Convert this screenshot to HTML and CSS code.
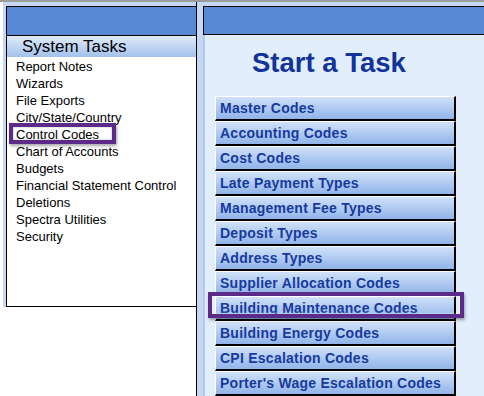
FILE: index.html
```html
<!DOCTYPE html>
<html lang="en">
<head>
    <meta charset="UTF-8">
    <title>Start a Task</title>
    <link rel="stylesheet" href="styles.css">
</head>
<body>
    <div class="topline"></div>
    <div class="frame">
        <div class="side">
            <div class="side-panel">
                <div class="side-header"></div>
                <div class="side-title">System Tasks</div>
                <ul class="task-list">
                    <li>Report Notes</li>
                    <li>Wizards</li>
                    <li>File Exports</li>
                    <li>City/State/Country</li>
                    <li class="marked">Control Codes<span class="mark"></span></li>
                    <li>Chart of Accounts</li>
                    <li>Budgets</li>
                    <li>Financial Statement Control</li>
                    <li>Deletions</li>
                    <li>Spectra Utilities</li>
                    <li>Security</li>
                </ul>
            </div>
        </div>
        <div class="main">
            <div class="main-header"></div>
            <div class="main-body">
                <h1 class="title">Start a Task</h1>
                <div class="buttons">
                    <div class="btn">Master Codes</div>
                    <div class="btn">Accounting Codes</div>
                    <div class="btn">Cost Codes</div>
                    <div class="btn">Late Payment Types</div>
                    <div class="btn">Management Fee Types</div>
                    <div class="btn">Deposit Types</div>
                    <div class="btn">Address Types</div>
                    <div class="btn">Supplier Allocation Codes</div>
                    <div class="btn marked">Building Maintenance Codes<span class="mark"></span></div>
                    <div class="btn">Building Energy Codes</div>
                    <div class="btn">CPI Escalation Codes</div>
                    <div class="btn">Porter's Wage Escalation Codes</div>
                </div>
            </div>
        </div>
    </div>
</body>
</html>
```

FILE: styles.css
```css
body {
    margin: 0;
    background: #fff;
    font-family: 'Liberation Sans', Arial, sans-serif;
    overflow: hidden;
}
.topline {
    height: 2px;
    background: #9c9c9c;
}
.frame {
    display: flex;
    align-items: flex-start;
    height: 394px;
}
/* left column */
.side {
    width: 190px;
    margin-left: 3px;
    padding: 4px 0 0 3px;
    background: #c4d8f4;
}
.side-panel {
    border: 1px solid #000;
    border-right: none;
    background: #fff;
}
.side-header {
    height: 28px;
    background: #5889d4;
    border-bottom: 1px solid #000;
}
.side-title {
    height: 21px;
    line-height: 21px;
    padding-left: 15px;
    font-size: 17px;
    color: #000;
    background: linear-gradient(#e0ebfa, #a3c1ec);
}
.task-list {
    list-style: none;
    margin: 0;
    padding: 1px 0 0 9px;
    height: 248px;
    font-size: 13px;
    line-height: 17px;
    color: #000;
}
.marked {
    position: relative;
}
.task-list .mark {
    position: absolute;
    left: -7px;
    top: -3px;
    width: 99px;
    height: 13px;
    border: 4px solid #5c2a88;
    box-shadow: inset 0 0 3px rgba(0, 0, 0, 0.25), 1px 2px 3px rgba(0, 0, 0, 0.35);
}
/* right column */
.main {
    flex: 1;
    height: 390px;
    padding: 4px 0 0 6px;
    background: #c4d8f4;
    border-left: 1px solid #000;
    display: flex;
    flex-direction: column;
}
.main-header {
    height: 28px;
    background: #5889d4;
    border: 1px solid #000;
    border-right: none;
}
.main-body {
    flex: 1;
    background: #e3eefd;
    border-left: 2px solid #b1c9ef;
    padding: 12px 0 0 10px;
}
.title {
    margin: 0 0 17px 37px;
    font-size: 27.5px;
    line-height: 32px;
    font-weight: bold;
    color: #123399;
}
.buttons {
    width: 241px;
}
.btn {
    height: 22px;
    line-height: 22px;
    padding-left: 4px;
    border-top: 1px solid #fff;
    border-left: 1px solid #fff;
    border-right: 2px solid #000;
    border-bottom: 2px solid #000;
    background: linear-gradient(#d0e1f9, #91b4e9);
    color: #173a9e;
    font-size: 14px;
    font-weight: bold;
    letter-spacing: 0.25px;
    white-space: nowrap;
}
.btn .mark {
    position: absolute;
    left: -8px;
    top: -5px;
    width: 248px;
    height: 18px;
    border: 4px solid #5c2a88;
    box-shadow: inset 0 0 3px rgba(255, 255, 255, 0.6), 1px 2px 3px rgba(0, 0, 0, 0.35);
}
```
